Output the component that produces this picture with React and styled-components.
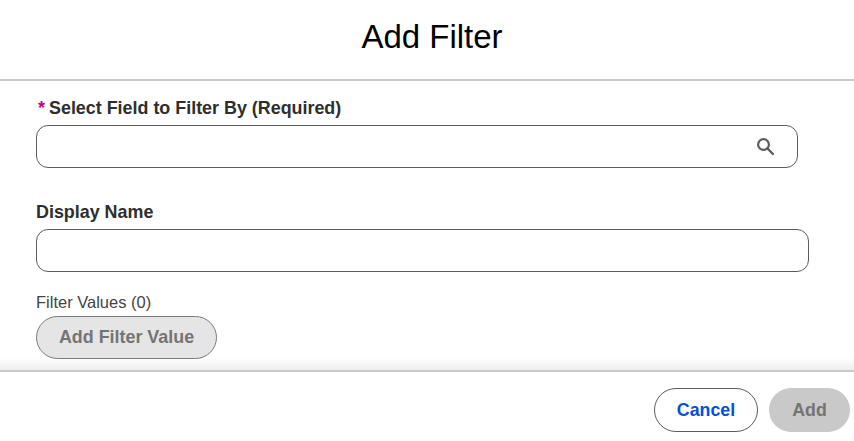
import React from 'react';
import styled, { createGlobalStyle } from 'styled-components';

const GlobalStyle = createGlobalStyle`
  html, body {
    margin: 0;
    padding: 0;
    background: #fff;
    font-family: "Liberation Sans", Arial, sans-serif;
  }
`;

const Modal = styled.div`
  width: 854px;
  height: 441px;
  display: flex;
  flex-direction: column;
  overflow: hidden;
  background: #fff;
`;

const Header = styled.header`
  height: 79px;
  flex: none;
  display: flex;
  align-items: center;
  justify-content: center;
  padding-left: 10px;
  box-sizing: content-box;
  border-bottom: 2px solid #c9c9c9;
`;

const Title = styled.h1`
  margin: 0;
  font-size: 33px;
  font-weight: 400;
  color: #000;
  transform: translateY(-3px);
`;

const Body = styled.div`
  flex: 1;
  display: flex;
  flex-direction: column;
  padding: 17px 0 0 36px;
  background: linear-gradient(to bottom, #fff 0, #fff 277px, #eee 289px);
`;

const Label = styled.label`
  display: flex;
  height: 20px;
  align-items: center;
  font-size: 17.9px;
  font-weight: 700;
  color: #2e2e2e;
  margin-bottom: ${(p) => p.$gap}px;
`;

const Star = styled.span`
  width: 13px;
  padding-left: 2px;
  box-sizing: border-box;
  color: #ba0680;
  font-weight: 700;
  font-size: 18px;
`;

const Field = styled.div`
  position: relative;
  width: ${(p) => p.$width}px;
  height: 43px;
  margin-bottom: ${(p) => p.$gap}px;
`;

const Input = styled.input`
  width: 100%;
  height: 100%;
  box-sizing: border-box;
  border: 1px solid #5c5c5c;
  border-radius: 12px;
  outline: none;
  background: #fff;
`;

const SearchIcon = styled.svg`
  position: absolute;
  top: 12px;
  right: 23px;
  width: 19px;
  height: 19px;
`;

const CountLabel = styled.div`
  font-size: 16.5px;
  line-height: 18px;
  color: #444;
  margin-bottom: 5px;
`;

const AddValueButton = styled.button`
  width: 181px;
  height: 43px;
  padding: 0;
  border: 1px solid #7a7a7a;
  border-radius: 22px;
  background: #e5e5e5;
  color: #747474;
  font: 700 17.9px "Liberation Sans", Arial, sans-serif;
`;

const Footer = styled.footer`
  height: 71px;
  flex: none;
  display: flex;
  align-items: flex-start;
  justify-content: flex-end;
  gap: 11px;
  padding: 16px 4px 0 0;
  box-sizing: border-box;
  border-top: 2px solid #c9c9c9;
`;

const FooterButton = styled.button`
  width: ${(p) => p.$width}px;
  height: 44px;
  padding: 0;
  border-radius: 22px;
  font: 700 17.8px "Liberation Sans", Arial, sans-serif;
  border: ${(p) => (p.$primary ? 'none' : '1px solid #5c5c5c')};
  background: ${(p) => (p.$primary ? '#c9c9c9' : '#fff')};
  color: ${(p) => (p.$primary ? '#747474' : '#0250d9')};
`;

export default function App() {
  return (
    <Modal>
      <GlobalStyle />
      <Header>
        <Title>Add Filter</Title>
      </Header>
      <Body>
        <Label $gap={7}>
          <Star>*</Star>
          Select Field to Filter By (Required)
        </Label>
        <Field $width={762} $gap={34}>
          <Input />
          <SearchIcon viewBox="0 0 19 19" fill="none" stroke="#5c5c5c" strokeWidth="2.2">
            <circle cx="7.5" cy="7.5" r="5.4" />
            <path d="M11.6 11.6 L17 17" strokeLinecap="round" />
          </SearchIcon>
        </Field>
        <Label $gap={7}>Display Name</Label>
        <Field $width={773} $gap={21}>
          <Input />
        </Field>
        <CountLabel>Filter Values (0)</CountLabel>
        <AddValueButton disabled>Add Filter Value</AddValueButton>
      </Body>
      <Footer>
        <FooterButton $width={104}>Cancel</FooterButton>
        <FooterButton $width={81} $primary disabled>Add</FooterButton>
      </Footer>
    </Modal>
  );
}
